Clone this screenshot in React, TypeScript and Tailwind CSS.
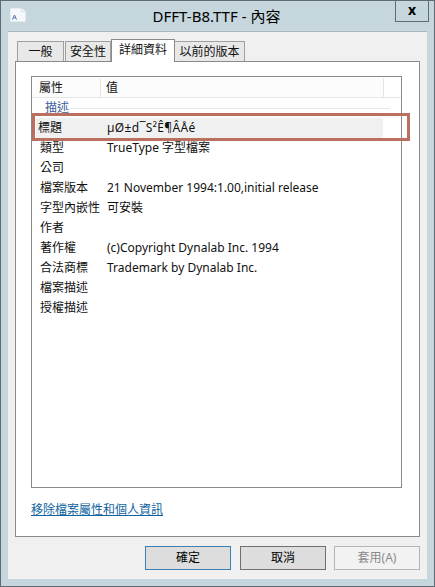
const FONT = "font-['Noto_Sans','Noto_Sans_CJK_TC',sans-serif]";

const rows = [
  { label: '類型', value: 'TrueType 字型檔案' },
  { label: '公司', value: '' },
  { label: '檔案版本', value: '21 November 1994:1.00,initial release' },
  { label: '字型內嵌性', value: '可安裝' },
  { label: '作者', value: '' },
  { label: '著作權', value: '(c)Copyright Dynalab Inc. 1994' },
  { label: '合法商標', value: 'Trademark by Dynalab Inc.' },
  { label: '檔案描述', value: '' },
  { label: '授權描述', value: '' },
];

const tabs = [
  { label: '一般', width: 'w-[47px]', gap: 'mr-px' },
  { label: '安全性', width: 'w-[46px]', gap: '' },
];

function FileIcon() {
  return (
    <svg width="16" height="14" viewBox="0 0 16 14" className="mt-[-3px] shrink-0">
      <path d="M0.5 0.5h11l4 3v10h-15z" fill="#f6f9fb" stroke="#e4ebef" />
      <path d="M11.5 0.5v3h4" fill="#ffffff" stroke="#d5dde2" />
      <path d="M2.5 11.5L4.5 7l2 4.5M3.2 10h2.6" fill="none" stroke="#5a78b0" strokeWidth="1" />
    </svg>
  );
}

function Button({ label, kind }: { label: string; kind: 'default' | 'normal' | 'disabled' }) {
  const styles = {
    default: 'mr-px border-[#3c7fb1] bg-[#dddddd] text-black',
    normal: 'border-[#707070] bg-[#dddddd] text-black',
    disabled: 'border-[#b5b5b5] bg-[#f2f2f2] text-[#8a8a8a]',
  };
  return (
    <button className={`flex h-6 w-[86px] items-center justify-center border text-xs ${styles[kind]}`}>
      {label}
    </button>
  );
}

export default function App() {
  return (
    <div className={`flex h-[587px] w-[435px] flex-col overflow-hidden border border-[#5f6b73] bg-[#c5d6dc] text-xs text-[#111] ${FONT}`}>
      <header className="relative flex h-[30px] shrink-0 items-center pl-[9px]">
        <FileIcon />
        <span className="absolute left-[-2px] right-0 top-[5px] text-center text-[15px] leading-5 text-black">
          DFFT-B8.TTF - 內容
        </span>
        <button className="absolute right-[5px] top-[-1px] flex h-[22px] w-[34px] items-center justify-center border border-[#5f6b73] pb-[3px] text-[14px] font-bold leading-none text-black">
          x
        </button>
      </header>

      <div className="mx-[7px] flex min-h-0 flex-1 flex-col border-t border-[#a9b6bc] bg-[#f0f0f0] px-[7px] pt-[8px]">
        <nav className="relative z-10 flex h-[21px] items-end pl-[2px]">
          {tabs.map((tab) => (
            <div
              key={tab.label}
              className={`flex h-[20px] items-center justify-center border border-b-0 border-[#a0a0a0] bg-[#e8e8e8] ${tab.width} ${tab.gap}`}
            >
              {tab.label}
            </div>
          ))}
          <div className="mb-[-1px] flex h-[23px] w-[64px] items-center justify-center border border-b-0 border-[#8a8a8a] bg-white pb-[2px]">
            詳細資料
          </div>
          <div className="flex h-[20px] w-[70px] items-center justify-center border border-b-0 border-l-0 border-[#a0a0a0] bg-[#e8e8e8]">
            以前的版本
          </div>
        </nav>

        <section className="flex h-[476px] flex-col border border-[#8a8a8a] bg-white px-[15px] pt-[14px]">
          <div className="relative h-[412px] w-[371px] border border-[#8a8a8a]">
            <div className="flex h-[21px] border-b border-[#e5e5e5] pl-[1px] pt-[1px]">
              <div className="flex w-[68px] items-center border-r border-[#e5e5e5] bg-[#fcfcfc] pl-[6px]">屬性</div>
              <div className="flex w-[283px] items-center border-r border-[#e5e5e5] bg-[#fcfcfc] pl-[5px]">值</div>
            </div>
            <div className="flex h-[20px] items-center pl-[13px]">
              <span className="text-[#3d5a9c]">描述</span>
              <div className="ml-[1px] mr-[11px] h-px flex-1 bg-[#e3e9ee]" />
            </div>
            <div className="ml-[4px] flex h-[20px] w-[347px] items-center bg-[#f0f0f0] text-[12px]">
              <span className="w-[71px] pl-[2px]">標題</span>
              <span className="tracking-[0.33px]">µØ±d¯S²Ê¶ÂÅé</span>
            </div>
            {rows.map((row) => (
              <div key={row.label} className="flex h-[20px] items-center">
                <span className="w-[75px] shrink-0 pl-[8px] whitespace-nowrap">{row.label}</span>
                <span className="whitespace-nowrap">{row.value}</span>
              </div>
            ))}
            <div className="absolute left-0 top-[36px] h-[28px] w-[378px] border-[3px] border-[#bb6f5f]" />
          </div>
          <a className="mt-[14px] w-fit leading-4 text-[#0f639f] underline">移除檔案屬性和個人資訊</a>
        </section>

        <footer className="flex flex-1 items-start justify-end gap-[8px] pt-[9px]">
          <Button label="確定" kind="default" />
          <Button label="取消" kind="normal" />
          <Button label="套用(A)" kind="disabled" />
        </footer>
      </div>
      <div className="h-[7px] shrink-0" />
    </div>
  );
}
